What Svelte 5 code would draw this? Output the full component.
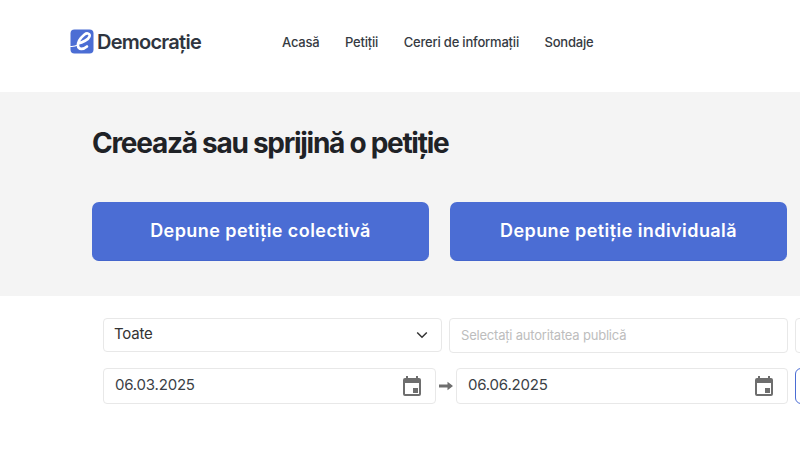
<script>
  const nav = ['Acasă', 'Petiții', 'Cereri de informații', 'Sondaje'];
</script>

<div class="page">
  <header class="top">
    <a class="brand" href="#home">
      <svg class="mark" width="24" height="25" viewBox="0 0 24 25">
        <rect x="0.5" y="0.5" width="23" height="24" rx="4" fill="#4b6dd4" />
        <path d="M0.5 17.5C3 17.8 6 17 8.5 15.5" fill="none" stroke="#fff" stroke-width="1.1" stroke-linecap="round" />
        <path d="M8 14.5C12.5 13.5 18.5 10.5 19.5 7.5C20.5 4.5 17 3.5 14.5 5.5C10.5 8.8 7.5 13.5 8 17C8.5 20.5 13 21 17 17.5" fill="none" stroke="#fff" stroke-width="2.6" stroke-linecap="round" />
      </svg>
      <span class="name">Democrație</span>
    </a>
    <nav class="nav">
      {#each nav as item}
        <a href="#x">{item}</a>
      {/each}
    </nav>
  </header>

  <section class="hero">
    <h1>Creează sau sprijină o petiție</h1>
    <div class="actions">
      <button class="cta">Depune petiție colectivă</button>
      <button class="cta">Depune petiție individuală</button>
    </div>
  </section>

  <section class="filters">
    <div class="row one">
      <div class="field select">
        <span>Toate</span>
        <svg width="12" height="8" viewBox="0 0 12 8"><path d="M1.2 1.5L6 6.2L10.8 1.5" fill="none" stroke="#333" stroke-width="1.5" /></svg>
      </div>
      <div class="field placeholder">Selectați autoritatea publică</div>
      <div class="field stub"></div>
    </div>
    <div class="row two">
      <div class="field date">
        <span>06.03.2025</span>
        <svg width="24" height="24" viewBox="0 0 24 24"><path fill="#6e6e6e" d="M19 4h-1V2h-2v2H8V2H6v2H5a2 2 0 0 0-2 2v14a2 2 0 0 0 2 2h14a2 2 0 0 0 2-2V6a2 2 0 0 0-2-2zm0 16H5V9h14v11zm-6-6h5v5h-5z"/></svg>
      </div>
      <svg class="arrow" width="14" height="10" viewBox="0 0 14 10"><path fill="#6e6e6e" d="M0 3.5h8.5V0.8L14 5l-5.5 4.2V6.5H0z" /></svg>
      <div class="field date">
        <span>06.06.2025</span>
        <svg width="24" height="24" viewBox="0 0 24 24"><path fill="#6e6e6e" d="M19 4h-1V2h-2v2H8V2H6v2H5a2 2 0 0 0-2 2v14a2 2 0 0 0 2 2h14a2 2 0 0 0 2-2V6a2 2 0 0 0-2-2zm0 16H5V9h14v11zm-6-6h5v5h-5z"/></svg>
      </div>
      <div class="field outlined"></div>
    </div>
  </section>
</div>

<style>
  :global(body) {
    margin: 0;
    background: #fff;
    overflow: hidden;
  }
  .page {
    width: 800px;
    height: 450px;
    overflow: hidden;
    font-family: Inter, "Noto Sans", sans-serif;
    color: #23272e;
  }
  .top {
    height: 92px;
    box-sizing: border-box;
    padding: 29px 0 0 70px;
    display: flex;
    align-items: flex-start;
  }
  .brand {
    display: flex;
    align-items: center;
    gap: 3px;
    width: 212px;
    height: 25px;
    text-decoration: none;
    color: #2f3540;
  }
  .name {
    font-size: 20px;
    font-weight: 600;
    letter-spacing: -0.75px;
    padding-top: 1px;
  }
  .nav {
    display: flex;
    gap: 25.5px;
    height: 25px;
    align-items: center;
  }
  .nav a {
    font-size: 13px;
    font-weight: 500;
    letter-spacing: -0.2px;
    color: #353a42;
    text-decoration: none;
  }
  .hero {
    height: 204px;
    box-sizing: border-box;
    background: #f4f4f4;
    padding: 33px 13px 0 92px;
  }
  h1 {
    margin: 0 0 41px;
    font-size: 28px;
    line-height: 36px;
    font-weight: 700;
    letter-spacing: -1.28px;
    color: #1f2226;
  }
  .actions {
    display: grid;
    grid-template-columns: 337px 337px;
    gap: 21px;
  }
  .cta {
    height: 59px;
    background: #4b6dd4;
    color: #fff;
    border: 0;
    border-bottom: 1px solid #4465cc;
    border-radius: 7px;
    font: 600 18px Inter, sans-serif;
    letter-spacing: 0.43px;
    padding-bottom: 2px;
  }
  .filters {
    padding: 22px 0 0 103px;
    display: flex;
    flex-direction: column;
    gap: 16px;
  }
  .row {
    display: flex;
    width: 720px;
  }
  .field {
    box-sizing: border-box;
    background: #fff;
    border: 1px solid #e8e8e8;
    border-radius: 4px;
    flex: none;
  }
  .one {
    gap: 7px;
    height: 34px;
  }
  .select {
    width: 339px;
    height: 34px;
    display: flex;
    align-items: center;
    justify-content: space-between;
    padding: 0 13px 0 10px;
    font-size: 15px;
    letter-spacing: -0.2px;
    color: #333;
  }
  .select span {
    padding-bottom: 3px;
  }
  .placeholder {
    width: 339px;
    height: 35px;
    padding-left: 11px;
    line-height: 32px;
    font-size: 13px;
    letter-spacing: -0.2px;
    color: #bdbdbd;
  }
  .stub {
    width: 100px;
    height: 35px;
  }
  .two {
    height: 36px;
    align-items: center;
  }
  .date {
    height: 36px;
    display: flex;
    align-items: center;
    justify-content: space-between;
    padding: 0 11px 0 11px;
    font-size: 15px;
    letter-spacing: -0.2px;
    color: #3b3f46;
  }
  .date span {
    padding-bottom: 3px;
  }
  .date svg {
    margin-bottom: 1px;
  }
  .two .date:first-child { width: 333px; }
  .two .date:nth-child(3) { width: 332px; margin-right: 7px; }
  .arrow {
    margin: 0 3px 0 3px;
    flex: none;
  }
  .outlined {
    width: 100px;
    height: 36px;
    border-color: #4b6dd4;
    border-radius: 6px;
  }
</style>
